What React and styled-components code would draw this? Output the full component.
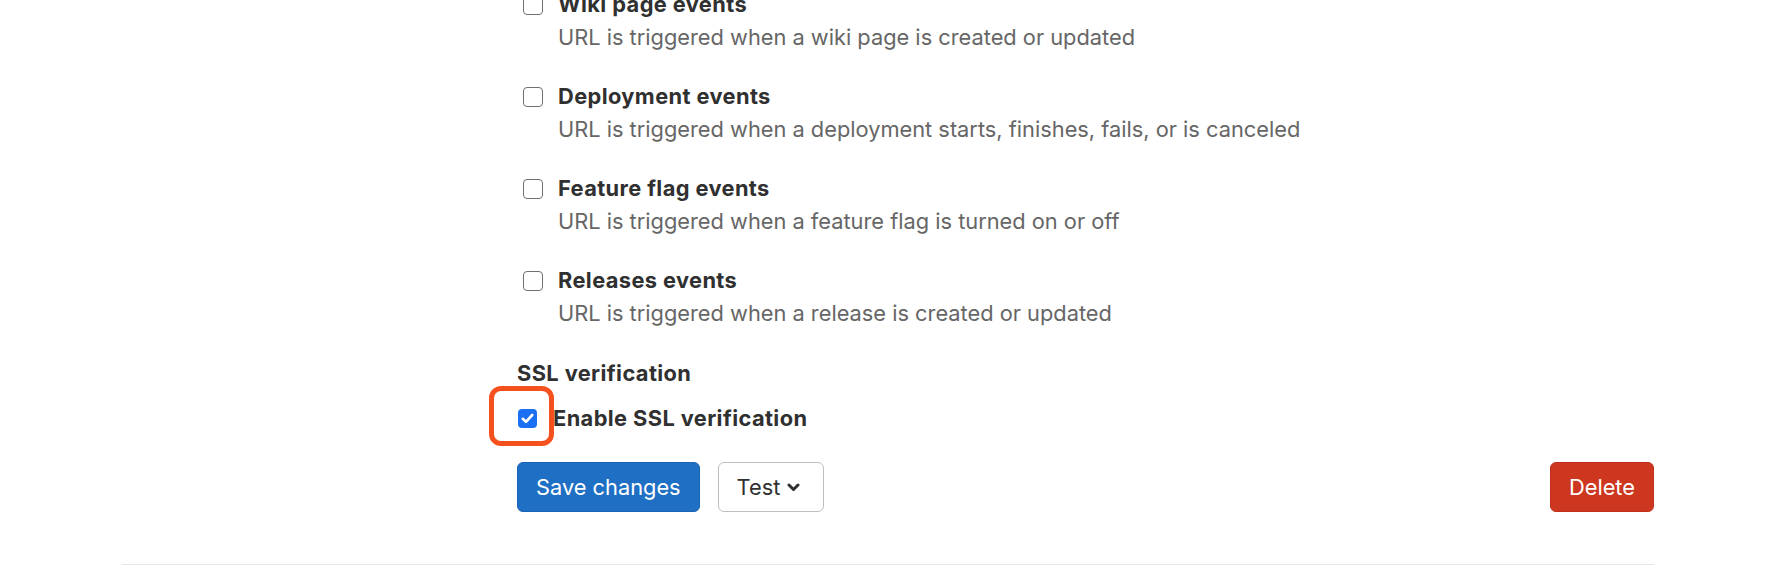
import React from 'react';
import styled, { createGlobalStyle } from 'styled-components';

const GlobalStyle = createGlobalStyle`
  body {
    margin: 0;
    background: #fff;
    font-family: Inter, "Noto Sans", sans-serif;
    color: #333;
    overflow: hidden;
  }
`

const Page = styled.div`
  padding-left: 122px;
  width: 1532px;
`
const Section = styled.div`
  display: grid;
  grid-template-columns: 395px 1fr;
  padding-bottom: 52px;
  border-bottom: 1px solid #e6e6e6;
`
const Form = styled.div`
  display: flex;
  flex-direction: column;
`
const EventList = styled.div`
  display: flex;
  flex-direction: column;
  gap: 30px;
  margin-top: -10px;
  margin-bottom: 31px;
  padding-left: 6px;
`
const EventItem = styled.div`
  display: flex;
  gap: 15px;
`
const Box = styled.span`
  flex-shrink: 0;
  width: 20px;
  height: 20px;
  box-sizing: border-box;
  margin-top: 4.5px;
  border: 1.5px solid #707070;
  border-radius: 4px;
  background: #fff;
`
const Texts = styled.div`
  display: flex;
  flex-direction: column;
  gap: 4px;
`
const Title = styled.div`
  font-size: 21.8px;
  line-height: 29px;
  font-weight: 700;
  letter-spacing: 0.4px;
  color: #303030;
`
const Desc = styled.div`
  font-size: 21.8px;
  line-height: 29px;
  color: #666;
`
const Label = styled(Title)`
  margin-bottom: 16px;
`
const CheckRow = styled.div`
  position: relative;
  display: flex;
  align-items: center;
  gap: 16px;
  padding-left: 1px;
`
const CheckedBox = styled.span`
  display: flex;
  align-items: center;
  justify-content: center;
  width: 19px;
  height: 19px;
  border-radius: 4px;
  background: #1b6ff2;
`
const Highlight = styled.span`
  position: absolute;
  left: -28px;
  top: -18px;
  width: 65px;
  height: 60px;
  box-sizing: border-box;
  border: 5px solid #f4511e;
  border-radius: 12px;
`
const Actions = styled.div`
  display: flex;
  gap: 18px;
  margin-top: 29px;
`
const Button = styled.button`
  display: flex;
  align-items: center;
  gap: 7px;
  height: 50px;
  box-sizing: border-box;
  padding: 0 ${p => p.$padR || 18}px 0 18px;
  font-family: inherit;
  font-size: 21.8px;
  border-radius: 6px;
  border: 1.5px solid ${p => p.$border};
  background: ${p => p.$bg};
  color: ${p => p.$color};
  margin-left: ${p => (p.$push ? 'auto' : '0')};
`

const events = [
  ['Wiki page events', 'URL is triggered when a wiki page is created or updated'],
  ['Deployment events', 'URL is triggered when a deployment starts, finishes, fails, or is canceled'],
  ['Feature flag events', 'URL is triggered when a feature flag is turned on or off'],
  ['Releases events', 'URL is triggered when a release is created or updated'],
]

const App = () => {
  return (
    <>
      <GlobalStyle />
      <Page>
        <Section>
          <div />
          <Form>
            <EventList>
              {events.map(([title, desc]) => (
                <EventItem key={title}>
                  <Box />
                  <Texts>
                    <Title>{title}</Title>
                    <Desc>{desc}</Desc>
                  </Texts>
                </EventItem>
              ))}
            </EventList>
            <Label>SSL verification</Label>
            <CheckRow>
              <CheckedBox>
                <svg width="13" height="11" viewBox="0 0 13 11">
                  <polyline points="1.8,5.8 5,8.8 11.2,2" fill="none" stroke="#fff" strokeWidth="2.6" strokeLinecap="round" strokeLinejoin="round" />
                </svg>
              </CheckedBox>
              <Title>Enable SSL verification</Title>
              <Highlight />
            </CheckRow>
            <Actions>
              <Button $bg="#1f6fc4" $border="#1a64b5" $color="#fff">Save changes</Button>
              <Button $bg="#fff" $border="#bfbfbf" $color="#303030" $padR={23}>
                Test
                <svg width="13" height="9" viewBox="0 0 13 9">
                  <polyline points="2,2 6.5,6.5 11,2" fill="none" stroke="#303030" strokeWidth="3" strokeLinecap="round" strokeLinejoin="round" />
                </svg>
              </Button>
              <Button $bg="#cd3720" $border="#c0301a" $color="#fff" $push>Delete</Button>
            </Actions>
          </Form>
        </Section>
      </Page>
    </>
  );
};

export default App;
